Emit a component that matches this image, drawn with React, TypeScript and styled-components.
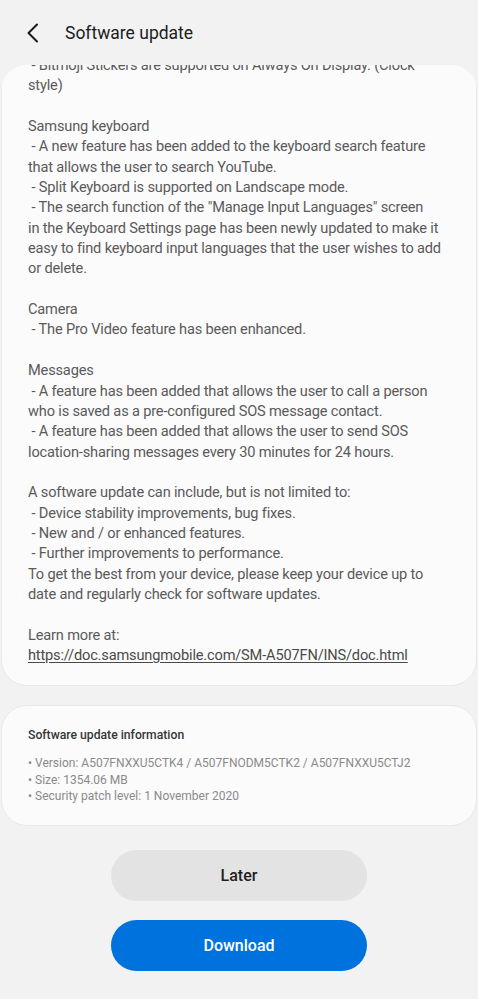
import * as React from 'react'
import styled, { createGlobalStyle } from 'styled-components'

const GlobalStyle = createGlobalStyle`
  html, body {
    margin: 0;
    padding: 0;
    background: #f2f2f2;
  }
  body {
    font-family: Roboto, "Noto Sans", "Liberation Sans", sans-serif;
  }
`

const Screen = styled.div`
  display: flex;
  flex-direction: column;
  height: 999px;
  width: 478px;
  overflow: hidden;
  background: #f2f2f2;
`

const TopBar = styled.header`
  display: flex;
  align-items: center;
  flex-shrink: 0;
  gap: 23px;
  height: 65px;
  padding: 0 0 0 24px;
  box-sizing: border-box;
`

const BackButton = styled.button`
  display: flex;
  align-items: center;
  justify-content: center;
  width: 18px;
  height: 24px;
  padding: 0;
  border: none;
  background: none;
  color: #1a1a1a;
`

const Title = styled.h1`
  margin: 0;
  font-size: 17.5px;
  font-weight: 400;
  color: #1c1c1c;
`

const ScrollArea = styled.div`
  flex: 1;
  min-height: 0;
  margin: 0 1px;
  overflow: hidden;
  border-radius: 26px 26px 0 0;
  display: flex;
  flex-direction: column;
  gap: 19px;
`

const Card = styled.section<{ $offset?: number }>`
  flex-shrink: 0;
  background: #fbfbfb;
  border: 1px solid #e9e9e9;
  border-radius: 26px;
  margin-top: ${p => (p.$offset ? `-${p.$offset}px` : '0')};
`

const Notes = styled.div`
  padding: 19px 26px 20px;
  font-size: 14.6px;
  letter-spacing: -0.17px;
  line-height: 20.35px;
  color: #5a5a5a;
  white-space: pre;
`

const Link = styled.a`
  color: #4a4a4a;
  text-decoration: underline;
  text-underline-offset: 2px;
`

const Info = styled.div`
  padding: 21px 26px 20px;
`

const InfoTitle = styled.h2`
  margin: 0 0 11px;
  font-size: 12.2px;
  line-height: 17px;
  font-weight: 500;
  color: #363636;
`

const InfoList = styled.ul`
  list-style: none;
  margin: 0;
  padding: 0;
  font-size: 12px;
  line-height: 16.5px;
  color: #8a8a8a;
`

const Footer = styled.footer`
  display: flex;
  flex-direction: column;
  align-items: center;
  gap: 19px;
  flex-shrink: 0;
  padding: 0 0 28px;
`

const ActionButton = styled.button<{ $primary?: boolean }>`
  width: 256px;
  height: 51px;
  border: none;
  border-radius: 26px;
  font-family: Roboto, "Noto Sans", sans-serif;
  font-size: 16px;
  font-weight: 500;
  background: ${p => (p.$primary ? '#0072de' : '#e3e3e3')};
  color: ${p => (p.$primary ? '#ffffff' : '#1e1e1e')};
`

const NOTES = ` - Bitmoji Stickers are supported on Always On Display. (Clock
style)

Samsung keyboard
 - A new feature has been added to the keyboard search feature
that allows the user to search YouTube.
 - Split Keyboard is supported on Landscape mode.
 - The search function of the "Manage Input Languages" screen
in the Keyboard Settings page has been newly updated to make it
easy to find keyboard input languages that the user wishes to add
or delete.

Camera
 - The Pro Video feature has been enhanced.

Messages
 - A feature has been added that allows the user to call a person
who is saved as a pre-configured SOS message contact.
 - A feature has been added that allows the user to send SOS
location-sharing messages every 30 minutes for 24 hours.

A software update can include, but is not limited to:
 - Device stability improvements, bug fixes.
 - New and / or enhanced features.
 - Further improvements to performance.
To get the best from your device, please keep your device up to
date and regularly check for software updates.

Learn more at:
`

const DOC_URL = 'https://doc.samsungmobile.com/SM-A507FN/INS/doc.html'

const INFO = [
    'Version: A507FNXXU5CTK4 / A507FNODM5CTK2 / A507FNXXU5CTJ2',
    'Size: 1354.06 MB',
    'Security patch level: 1 November 2020',
]

const ChevronLeft: React.FC = () => (
    <svg width="14" height="20" viewBox="0 0 14 20" fill="none">
        <path d="M11 1.5 L2.5 10 L11 18.5" stroke="currentColor" strokeWidth="2" strokeLinecap="round" strokeLinejoin="round" />
    </svg>
)

const App: React.FC = () => (
    <>
        <GlobalStyle />
        <Screen>
            <TopBar>
                <BackButton aria-label="Back">
                    <ChevronLeft />
                </BackButton>
                <Title>Software update</Title>
            </TopBar>
            <ScrollArea>
                <Card $offset={30}>
                    <Notes>
                        {NOTES}
                        <Link href="#">{DOC_URL}</Link>
                    </Notes>
                </Card>
                <Card>
                    <Info>
                        <InfoTitle>Software update information</InfoTitle>
                        <InfoList>
                            {INFO.map(item => (
                                <li key={item}>• {item}</li>
                            ))}
                        </InfoList>
                    </Info>
                </Card>
            </ScrollArea>
            <Footer>
                <ActionButton>Later</ActionButton>
                <ActionButton $primary>Download</ActionButton>
            </Footer>
        </Screen>
    </>
)

export default App
